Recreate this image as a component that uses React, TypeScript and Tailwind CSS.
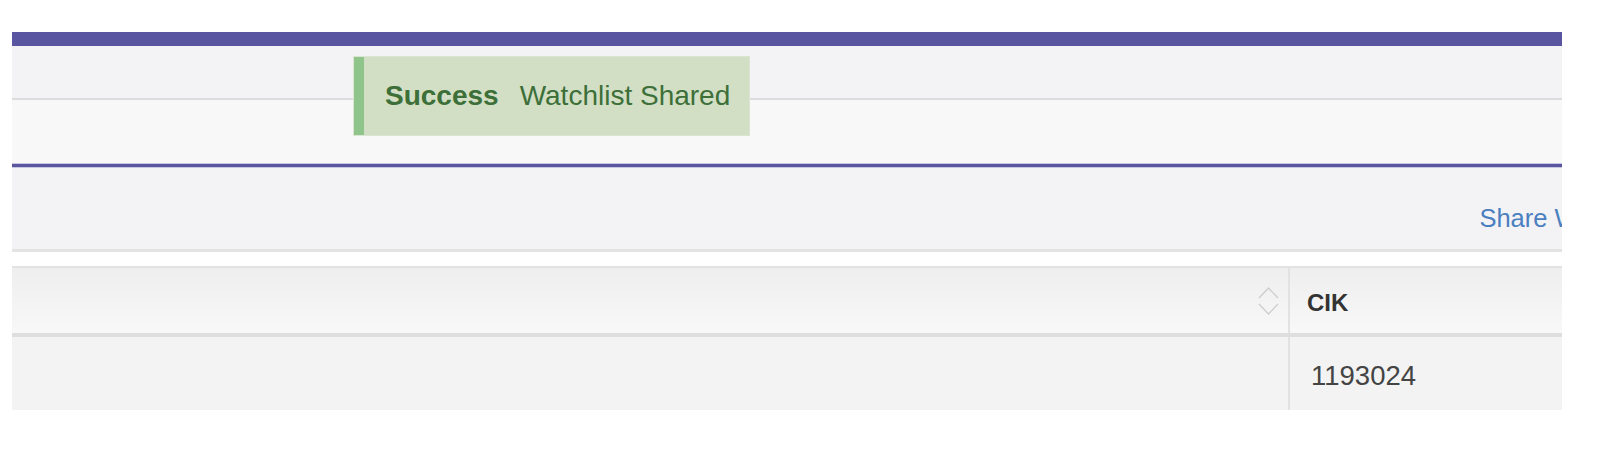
import React from "react";

function SortIcon() {
  return (
    <svg width="22" height="28" viewBox="0 0 22 28" fill="none" stroke="#cdcdcd" strokeWidth="1.3">
      <path d="M1 11 L10.5 1 L20 11" />
      <path d="M1 17 L10.5 27 L20 17" />
    </svg>
  );
}

export default function App() {
  return (
    <div className="min-h-[458px] w-full bg-white pt-[32px]" style={{ fontFamily: '"Liberation Sans", Arial, sans-serif' }}>
      <div className="relative ml-[12px] w-[1550px] overflow-hidden">
        {/* top header bar */}
        <div className="h-[14px] bg-[#5a55a0]" />
        <div className="h-[52px] bg-[#f3f3f5]" />
        <div className="h-[2px] bg-[#dcdcde]" />
        <div className="h-[63px] bg-[#f8f8f8]" />
        <div className="h-[5px] border-y border-[#c9c7df] bg-[#5a55a0]" />

        {/* toolbar with share link */}
        <div className="flex h-[81px] justify-end bg-[#f3f3f5] pt-[37px]">
          <a className="-mr-[95px] whitespace-nowrap text-[25.5px] leading-[26px] text-[#4b7fc0]">Share Watchlist</a>
        </div>
        <div className="h-[3px] bg-[#e3e3e3]" />
        <div className="h-[14px] bg-white" />

        {/* table */}
        <div className="border-t-2 border-[#e2e2e2]">
          <div className="flex h-[69px] border-b-4 border-[#dedede] bg-gradient-to-b from-[#eeeeee] to-[#f8f8f8]">
            <div className="flex flex-1 items-center justify-end pr-[8px]">
              <SortIcon />
            </div>
            <div className="w-[2px] bg-[#e2e2e2]" />
            <div className="w-[272px] pl-[17px] pt-[23px] text-[24px] font-bold leading-[24px] text-[#333]">CIK</div>
          </div>
          <div className="flex h-[73px] bg-[#f3f3f3]">
            <div className="flex-1" />
            <div className="w-[2px] bg-[#e2e2e2]" />
            <div className="w-[272px] pl-[21px] pt-[25px] text-[27.5px] leading-[28px] text-[#444]">1193024</div>
          </div>
        </div>

        {/* success toast */}
        <div className="absolute left-[341px] top-[24px] flex h-[80px] w-[397px] border border-[#dbe6d2] bg-[#d2dfc5]">
          <div className="w-[10px] bg-[#8fc48b]" />
          <div className="flex items-start whitespace-nowrap pl-[21px] pt-[25px] text-[28px] leading-[28px] text-[#3d6f39]">
            <span className="font-bold">Success</span>
            <span className="ml-[21px]">Watchlist Shared</span>
          </div>
        </div>
      </div>
    </div>
  );
}
